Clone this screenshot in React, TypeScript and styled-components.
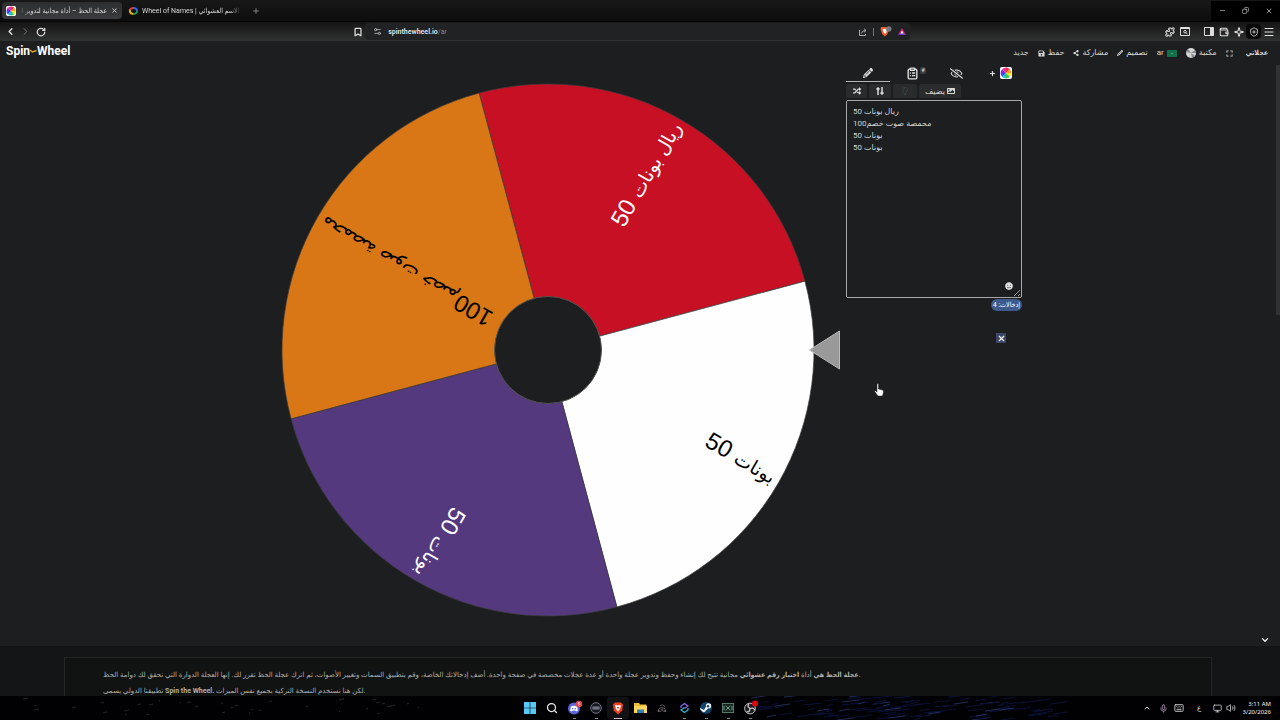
import React from "react";
import styled, { createGlobalStyle, css } from "styled-components";
import { Bookmark, ChevronDown, ChevronLeft, ChevronRight, ChevronUp, ClipboardList, Copy, Keyboard, Menu, Mic, Minus, Monitor, Plus, Puzzle, RotateCw, Search, Settings2, ShieldPlus, Sparkle, Volume2, Wallet, X } from "lucide-react";
import { FaRegEyeSlash, FaRandom, FaImage, FaShareAlt, FaSave, FaExpand, FaRegLightbulb, FaSmile } from "react-icons/fa";
import { FaPencil } from "react-icons/fa6";

const GlobalStyle = createGlobalStyle`
  * { box-sizing: border-box; }
  body { margin: 0; background: #1c1e1f; font-family: Roboto, "DejaVu Sans", sans-serif; color: #d8d8d8; }
  button, textarea { font: inherit; color: inherit; }
  svg { display: block; flex: none; }
`;

const narrow = css`
  font-family: Roboto, "DejaVu Sans Condensed", "DejaVu Sans", sans-serif;
`;

const Desktop = styled.div`
  position: relative;
  display: flex;
  flex-direction: column;
  min-height: 100vh;
  overflow: hidden;
`;

const TabStrip = styled.div`
  display: flex;
  align-items: center;
  gap: 2px;
  height: 22px;
  padding-left: 2px;
  background: linear-gradient(#181818, #0d0d0d);
  border-bottom: 1px solid #050505;
`;

const Tab = styled.div<{ $active?: boolean }>`
  display: flex;
  align-items: center;
  gap: 4px;
  width: ${(p) => (p.$active ? 120 : 122)}px;
  height: 17px;
  padding: 0 4px;
  border-radius: 4px;
  ${(p) => p.$active && css`background: linear-gradient(#2d2e2f, #3b3c3d);`}
`;

const TabTitle = styled.span<{ $rtl?: boolean; $width: number }>`
  ${narrow}
  width: ${(p) => p.$width}px;
  overflow: hidden;
  white-space: nowrap;
  font-size: 7px;
  line-height: 12px;
  direction: ${(p) => (p.$rtl ? "rtl" : "ltr")};
  mask-image: linear-gradient(${(p) => (p.$rtl ? "to left" : "to right")}, #000 88%, transparent);
`;

const IconButton = styled.button<{ $w?: number; $dim?: boolean; $dark?: boolean; $apart?: boolean }>`
  display: flex;
  align-items: center;
  justify-content: center;
  width: ${(p) => p.$w ?? 15}px;
  height: 15px;
  margin-left: ${(p) => (p.$apart ? 9 : 0)}px;
  padding: 0;
  border: 0;
  border-radius: 4px;
  background: ${(p) => (p.$dark ? "#080808" : "none")};
  color: ${(p) => (p.$dim ? "#808080" : "#dedede")};
`;

const WindowButtons = styled.div`
  display: flex;
  align-items: center;
  justify-content: space-between;
  height: 20px;
  margin-left: auto;
  background: #000;
`;

const Toolbar = styled.div`
  display: flex;
  align-items: center;
  height: 19px;
  padding: 0 4px 0 3px;
  background: linear-gradient(#151515, #303131);
`;

const Spacer = styled.div<{ $grow?: number }>`
  flex: ${(p) => p.$grow ?? 1};
`;

const AddressGroup = styled.div`
  display: flex;
  align-items: center;
  width: 44%;
`;

const AddressBar = styled.div`
  display: flex;
  flex: 1;
  align-items: center;
  gap: 6px;
  height: 17px;
  padding: 0 4px 0 8px;
  border-radius: 4px;
  background: #202223;
  font-size: 7px;
  color: #888;
  b { color: #ddd; }
`;

const Divider = styled.span`
  width: 1px;
  height: 8px;
  background: #777;
`;

const SiteHeader = styled.header`
  display: flex;
  align-items: center;
  justify-content: space-between;
  height: 24px;
  padding: 0 12px 0 6px;
`;

const Logo = styled.a`
  display: flex;
  align-items: center;
  height: 20px;
  margin-bottom: 4px;
  color: #fff;
  font-weight: 700;
  font-size: 12px;
  text-decoration: none;
`;

const Nav = styled.nav`
  display: flex;
  align-items: center;
  gap: 9px;
`;

const NavLink = styled.a<{ $strong?: boolean }>`
  display: flex;
  align-items: center;
  gap: 3px;
  color: #d6d6d6;
  font-size: 8px;
  line-height: 12px;
  text-decoration: none;
  white-space: nowrap;
  ${(p) => p.$strong && css`
    ${narrow}
    margin-left: 4px;
    font-size: 7px;
    font-weight: 700;
  `}
`;

const Flag = styled.span`
  width: 10px;
  height: 7px;
  border-radius: 1px;
  background: #12704b;
  color: #b9dccb;
  font-size: 4px;
  line-height: 6px;
  text-align: center;
`;

const Stage = styled.main`
  position: relative;
  display: grid;
  flex: 1;
  grid-template-columns: minmax(0, 560px) 176px;
  gap: 6px;
  justify-content: center;
  align-items: start;
  padding-left: 22px;
`;

const WheelDrawing = styled.svg`
  width: 100%;
  height: auto;
  margin-top: 17px;
`;

const SliceText = styled.text<{ $fill: string }>`
  fill: ${(p) => p.$fill};
  font-family: "Liberation Sans", "DejaVu Sans", sans-serif;
  font-size: 19px;
  text-anchor: end;
`;

const SliceNumber = styled.tspan`
  font-size: 24px;
`;

const Panel = styled.aside`
  display: flex;
  flex-direction: column;
`;

const PanelTabs = styled.div`
  display: grid;
  grid-template-columns: repeat(4, 1fr);
`;

const PanelTab = styled.button<{ $active?: boolean }>`
  position: relative;
  display: flex;
  align-items: center;
  justify-content: center;
  gap: 4px;
  height: 17px;
  padding: 0;
  border: 0;
  border-bottom: 1px solid ${(p) => (p.$active ? "#b5b5b5" : "transparent")};
  background: none;
  color: #e2e2e2;
`;

const Mark = styled.span`
  position: absolute;
  top: 2px;
  right: 8px;
  width: 6px;
  border-radius: 2px;
  background: #3c3f41;
  font-size: 5px;
  line-height: 7px;
`;

const Tools = styled.div`
  display: flex;
  gap: 2px;
  margin: 2px 0;
`;

const Tool = styled.button<{ $w: number; $dim?: boolean }>`
  display: flex;
  align-items: center;
  justify-content: center;
  gap: 2px;
  width: ${(p) => p.$w}px;
  height: 14px;
  padding: 0;
  border: 0;
  border-radius: 2px;
  background: #292b2c;
  color: ${(p) => (p.$dim ? "#3b4345" : "#dadada")};
  font-size: 8px;
`;

const Entries = styled.div`
  position: relative;
`;

const EntryBox = styled.textarea`
  display: block;
  width: 100%;
  height: 198px;
  padding: 5px 6px;
  border: 1px solid #a8a8a8;
  border-radius: 2px;
  outline: 0;
  background: #1c1e1f;
  color: #d4d4d4;
  font-size: 8px;
  line-height: 12px;
`;

const Smile = styled.button`
  position: absolute;
  right: 9px;
  bottom: 8px;
  padding: 0;
  border: 0;
  background: none;
  color: #e0e0e0;
`;

const Count = styled.span`
  ${narrow}
  align-self: flex-end;
  height: 12px;
  margin-top: 1px;
  padding: 0 2px;
  border-radius: 6px;
  background: #3e5a8d;
  color: #fff;
  font-size: 7px;
  line-height: 12px;
`;

const Close = styled.button`
  display: flex;
  align-self: flex-end;
  align-items: center;
  justify-content: center;
  width: 10px;
  height: 10px;
  margin: 22px 16px 0 0;
  padding: 0;
  border: 0;
  background: #3c4568;
  color: #fff;
`;

const Cursor = styled.svg`
  position: absolute;
  left: 874px;
  top: 383px;
`;

const Scroll = styled.div`
  position: absolute;
  top: 0;
  right: 0;
  width: 4px;
  height: 250px;
  background: #303234;
`;

const Down = styled.button`
  position: absolute;
  right: 10px;
  bottom: 1px;
  padding: 0;
  border: 0;
  background: none;
  color: #eee;
`;

const About = styled.footer`
  height: 50px;
  padding: 11px 68px 0 64px;
  background: #131516;
  overflow: hidden;
`;

const AboutCard = styled.div`
  height: 60px;
  padding: 9px 38px;
  border: 1px solid #232625;
  background: #111312;
  color: #aeb0af;
  font-size: 7px;
  line-height: 16px;
  p { margin: 0; white-space: nowrap; }
  b { ${narrow} }
`;

const Taskbar = styled.div`
  position: relative;
  display: grid;
  grid-template-columns: 1fr auto 1fr;
  align-items: center;
  height: 24px;
  background: #010103;
`;

const Waves = styled.svg`
  position: absolute;
  inset: 0;
  width: 100%;
  height: 100%;
`;

const Apps = styled.div`
  position: relative;
  display: flex;
  grid-column: 2;
`;

const AppButton = styled.button<{ $open?: boolean; $active?: boolean }>`
  position: relative;
  display: flex;
  align-items: center;
  justify-content: center;
  width: 22px;
  height: 22px;
  padding: 0;
  border: 0;
  border-radius: 3px;
  background: ${(p) => (p.$active ? "#111214" : "none")};
  color: #eee;
  &::after {
    content: "";
    position: absolute;
    bottom: 0;
    width: ${(p) => (p.$active ? 8 : 3)}px;
    height: 1px;
    background: ${(p) => (p.$active ? "#d8bede" : p.$open ? "#8a8a8a" : "transparent")};
  }
`;

const Tray = styled.div`
  position: relative;
  display: flex;
  align-items: center;
  justify-content: flex-end;
  padding-right: 9px;
`;

const LangGlyph = styled.span`
  font-size: 7px;
`;

const Clock = styled.time`
  width: 34px;
  color: #f2f2f2;
  font-family: "Noto Sans", sans-serif;
  font-size: 6px;
  line-height: 8px;
  text-align: right;
  white-space: nowrap;
`;

const HUES = ["#ff2e2e", "#ff9b1f", "#f6e52b", "#3ecb45", "#20bfe8", "#2e4bf0", "#8a25d8", "#f02bb0"];

const slice = (cx: number, cy: number, r: number, from: number, sweep: number) => {
  const at = (deg: number) => {
    const a = (deg * Math.PI) / 180;
    return `${cx + r * Math.cos(a)} ${cy + r * Math.sin(a)}`;
  };
  return `M${cx} ${cy}L${at(from)}A${r} ${r} 0 0 1 ${at(from + sweep)}Z`;
};

const ColorWheel = ({ size = 12 }: { size?: number }) => (
  <svg width={size} height={size} viewBox="0 0 12 12">
    <rect width="12" height="12" rx="2" fill="#fff" />
    {HUES.map((h, i) => <path key={h} d={slice(6, 6, 5.4, i * 45 - 90, 45)} fill={h} />)}
  </svg>
);

const SLICES = [
  { label: "ريال بونات", amount: " 50", fill: "#c81025", text: "#fff", from: -105 },
  { label: "بونات", amount: " 50", fill: "#fefefe", text: "#000", from: -15 },
  { label: "بونات", amount: " 50", fill: "#55397f", text: "#fff", from: 75 },
  { label: "محمصة صوت خصم", amount: "100", fill: "#d97716", text: "#000", from: 165 },
];

const Wheel = () => (
  <WheelDrawing viewBox="0 0 560 536" role="img" aria-label="عجلة الحظ">
    {SLICES.map((s) => <path key={s.from} d={slice(268, 268, 266, s.from, 90)} fill={s.fill} stroke="#3c3c3c" strokeWidth="0.7" />)}
    {SLICES.map((s) => (
      <SliceText key={s.from} $fill={s.text} transform={`rotate(${s.from + 45} 268 268)`} x="528" y="273">
        {s.label}<SliceNumber>{s.amount}</SliceNumber>
      </SliceText>
    ))}
    <circle cx="268" cy="268" r="53.5" fill="#1c1e1f" stroke="#55564f" />
    <path d="M529.5 268L559.5 249V287Z" fill="#999" stroke="#bcbcbc" />
  </WheelDrawing>
);

const noise = (n: number) => {
  const v = Math.sin(n * 127.1) * 43758.5;
  return v - Math.floor(v);
};
const streaks = Array.from({ length: 130 }, (_, i) => ({
  x: 750 + Math.round(noise(i) * 310),
  y: Math.round(noise(i + 200) * 24),
  w: 5 + Math.round(noise(i + 400) * 14),
  c: noise(i + 600) > 0.88 ? "#212c55" : "#0a1034",
}));
const specks = Array.from({ length: 36 }, (_, i) => ({
  x: Math.round(noise(i + 50) * 420),
  y: 2 + Math.round(noise(i + 90) * 20),
  w: 1 + Math.round(noise(i + 130) * 4),
}));

const apps: { name: string; open?: boolean; active?: boolean; icon: React.ReactNode }[] = [
  { name: "Start", icon: <svg width="12" height="12" viewBox="0 0 12 12"><path fill="#5ac8f5" d="M0 0h5.7v5.7H0zM6.3 0H12v5.7H6.3zM0 6.3h5.7V12H0zM6.3 6.3H12V12H6.3z" /></svg> },
  { name: "Search", icon: <Search size={12} strokeWidth={2.5} /> },
  { name: "Discord", open: true, icon: (
    <svg width="18" height="16" viewBox="0 0 18 16"><circle cx="9" cy="8.5" r="6" fill="#5967db" /><path d="M6 6.500q3-1.300 6 0l1 4-2 1-.7-1H7.700l-.7 1-2-1z" fill="#fff" /><circle cx="7.700" cy="8.800" r=".8" fill="#5967db" /><circle cx="10.300" cy="8.800" r=".8" fill="#5967db" /><circle cx="14" cy="4" r="3.300" fill="#e0464e" /><path d="M15 2.500h-1.600v1.300h1.200q1 1-1.200 1.500" fill="none" stroke="#fff" strokeWidth=".6" /></svg>) },
  { name: "Stream", open: true, icon: <svg width="12" height="12" viewBox="0 0 12 12"><circle cx="6" cy="6" r="5.300" fill="#15161f" stroke="#77778a" /><path d="M2.500 4.500h7v3h-7z" fill="#8e8fa0" /><path d="M3.500 6h1M5.500 6h1M7.500 6h1" stroke="#15161f" strokeWidth="1" /></svg> },
  { name: "Brave", active: true, icon: <svg width="12" height="13" viewBox="0 0 12 13"><path d="M3 .5h6l2 2-.7 6L6 12.500 1.700 8.500 1 2.500z" fill="#ed3f21" /><path d="M3 3.500l1.500-.5L6 3.500 7.500 3 9 3.500 8 7 6 9.500 4 7z" fill="#fff" /><path d="M4.800 5L6 7.500 7.200 5z" fill="#ed3f21" /></svg> },
  { name: "Files", icon: <svg width="13" height="12" viewBox="0 0 13 12"><path d="M0 1h5l1 1.500h6.500V11H0z" fill="#edbd35" /><path d="M0 4h13v7H0z" fill="#fbd65e" /><path d="M3 7.500h7V11H3z" fill="#2f7fb9" /></svg> },
  { name: "Gauge", icon: <svg width="10" height="10" viewBox="0 0 11 11"><path d="M3 3l3-1 3 2M1 9q1-4 4-4 4 0 5 4" fill="none" stroke="#6b6365" /><path d="M5.500 6v3M1 9h3M7 9h3" stroke="#c9b8b8" strokeWidth=".8" /></svg> },
  { name: "Streamer", open: true, icon: <svg width="9" height="12" viewBox="0 0 9 12" fill="none" strokeWidth="1.300"><path d="M1 6V4L4.500 1.500 8 4 4.500 6.500" stroke="#9460ee" /><path d="M8 6v2L4.500 10.500 1 8l3.500-2.500" stroke="#2cb8cd" /></svg> },
  { name: "Steam", open: true, icon: <svg width="12" height="12" viewBox="0 0 12 12"><circle cx="6" cy="6" r="6" fill="#12436c" /><path d="M0 6l4 2 2-3.500a2.600 2.600 0 1 1 2 2L5.600 9A2 2 0 0 1 2 9L.5 8z" fill="#f3f5f7" /><circle cx="8" cy="4.300" r="1.200" fill="#12436c" /></svg> },
  { name: "Capture", open: true, icon: <svg width="12" height="10" viewBox="0 0 12 10"><rect x=".5" y=".5" width="11" height="9" fill="#14231e" stroke="#587a6b" /><path d="M3.500 2.500l5 5M8.500 2.500l-5 5M2 3v4M10 3v4" stroke="#76a08d" /></svg> },
  { name: "OBS", open: true, icon: <svg width="18" height="16" viewBox="0 0 18 16"><circle cx="9" cy="8.500" r="5.400" fill="#1d1d20" stroke="#bcbcbc" /><path d="M9 8.500Q5.500 6 8 4M9 8.500Q13.500 7 13.500 10.500M9 8.500Q8.500 13 5.500 11.500" fill="none" stroke="#ccc" strokeWidth="1.300" /><circle cx="14" cy="3.500" r="3" fill="#e00514" /></svg> },
];

export default function App() {
  return (
    <Desktop>
      <GlobalStyle />
      <TabStrip>
        <Tab $active>
          <ColorWheel size={10} />
          <TabTitle $rtl $width={87}>عجلة الحظ – أداة مجانية لتدوير العجلة</TabTitle>
          <X size={7} strokeWidth={3} />
        </Tab>
        <Tab>
          <svg width="10" height="10" viewBox="0 0 10 10" fill="none" strokeWidth="2">
            <path d="M2 3.500A4 3 0 0 1 6 2" stroke="#e24335" /><path d="M6 2a3.500 3 0 0 1 3 3" stroke="#3369e8" /><path d="M9 5a4 3 0 0 1-4 3" stroke="#1aa260" /><path d="M5 8Q1 7 2 3.500" stroke="#eeb211" />
          </svg>
          <TabTitle $width={100}>Wheel of Names | منتقي الاسم العشوائي</TabTitle>
        </Tab>
        <IconButton aria-label="New tab" $dim><Plus size={8} strokeWidth={3} /></IconButton>
        <WindowButtons>
          <IconButton aria-label="Minimize" $w={23}><Minus size={7} /></IconButton>
          <IconButton aria-label="Restore" $w={23}><Copy size={7} transform="scale(-1 1)" /></IconButton>
          <IconButton aria-label="Close" $w={23}><X size={8} /></IconButton>
        </WindowButtons>
      </TabStrip>
      <Toolbar>
        <IconButton aria-label="Back"><ChevronLeft size={11} strokeWidth={3} /></IconButton>
        <IconButton aria-label="Forward" $dim><ChevronRight size={11} /></IconButton>
        <IconButton aria-label="Reload"><RotateCw size={10} strokeWidth={3} /></IconButton>
        <Spacer $grow={6} />
        <AddressGroup>
          <IconButton aria-label="Bookmark"><Bookmark size={10} strokeWidth={3} /></IconButton>
          <AddressBar>
            <Settings2 size={9} color="#c8c8c8" />
            <span><b>spinthewheel.io</b>/ar</span>
            <Spacer />
            <svg width="8" height="8" viewBox="0 0 8 8" fill="none" stroke="#aaa"><path d="M.5 2v5.500H6.500V6M2.500 5.500Q2.500 2.500 6.500 2.500M5 .7L7 2.500 5 4.300" /></svg>
            <Divider />
            <svg width="12" height="11" viewBox="0 0 12 11"><path d="M1 1h7l1 2-1.500 5L5 10.500 2 8 .5 3z" fill="#ee5a2b" /><path d="M2.700 3h4L6.500 6 5 8 3.300 6z" fill="#fff" /><circle cx="8.800" cy="3" r="2.700" fill="#777a80" /></svg>
            <svg width="8" height="9" viewBox="0 0 9 9"><path d="M4.500.5L9 8.500H0z" fill="#d6236c" /><path d="M9 8.500H0L1 6.700h7z" fill="#6b37c9" /><path d="M4.500 3.500L6.300 6.800H2.700z" fill="#fff" /></svg>
          </AddressBar>
        </AddressGroup>
        <Spacer $grow={5} />
        <IconButton aria-label="Extensions"><Puzzle size={10} strokeWidth={2.5} /></IconButton>
        <IconButton aria-label="Search tabs"><svg width="10" height="9" viewBox="0 0 10 9" fill="none" stroke="currentColor"><path d="M.5.5h9v8h-9zM.5 1.500h9" /><circle cx="5" cy="4.700" r="1.300" /><path d="M6 5.700l1.500 1.300" /></svg></IconButton>
        <IconButton aria-label="Side panel" $apart><svg width="10" height="9" viewBox="0 0 10 9"><path d="M.5.5h9v8h-9z" fill="none" stroke="currentColor" /><path d="M6 1h3.500v7.500H6z" fill="currentColor" /></svg></IconButton>
        <IconButton aria-label="Wallet"><Wallet size={10} strokeWidth={2.5} /></IconButton>
        <IconButton aria-label="Assistant"><Sparkle size={10} strokeWidth={2.5} /></IconButton>
        <IconButton aria-label="VPN" $dark><ShieldPlus size={10} /></IconButton>
        <IconButton aria-label="Menu"><Menu size={12} /></IconButton>
      </Toolbar>
      <SiteHeader>
        <Logo href="#">
          Spin
          <svg width="7" height="6" viewBox="0 0 7 6"><path d="M0 2l2.500 2 4-1.500" fill="none" stroke="#e0a126" strokeWidth="1.500" /></svg>
          Wheel
        </Logo>
        <Nav>
          <NavLink href="#">جديد</NavLink>
          <NavLink href="#"><FaSave size={7} />حفظ</NavLink>
          <NavLink href="#"><FaShareAlt size={6} />مشاركة</NavLink>
          <NavLink href="#"><FaPencil size={6} />تصميم</NavLink>
          <NavLink href="#">ar<Flag>ــ</Flag></NavLink>
          <NavLink href="#">
            <svg width="10" height="10" viewBox="0 0 10 10"><circle cx="5" cy="5" r="5" fill="#d5d5d5" /><path d="M5 5L0 4l2-3zM5 5l1 5 3-2zM5 5l4-3 1 3z" fill="#85888a" /></svg>
            مكتبة
          </NavLink>
          <NavLink href="#" aria-label="Fullscreen"><FaExpand size={7} /></NavLink>
          <NavLink href="#" $strong>عجلاتي</NavLink>
        </Nav>
      </SiteHeader>
      <Stage>
        <Wheel />
        <Panel>
          <PanelTabs>
            <PanelTab $active aria-label="Edit"><FaPencil size={10} /></PanelTab>
            <PanelTab aria-label="Results"><ClipboardList size={13} strokeWidth={2.5} /><Mark>#</Mark></PanelTab>
            <PanelTab aria-label="Hide"><FaRegEyeSlash size={13} /></PanelTab>
            <PanelTab aria-label="Add wheel"><Plus size={7} strokeWidth={4} /><ColorWheel /></PanelTab>
          </PanelTabs>
          <Tools>
            <Tool $w={21} aria-label="Shuffle"><FaRandom size={8} /></Tool>
            <Tool $w={22} aria-label="Sort"><svg width="8" height="8" viewBox="0 0 8 8"><path d="M2 8V1M.5 2.500L2 1l1.500 1.500M6 0v7M4.500 5.500L6 7l1.500-1.500" fill="none" stroke="currentColor" strokeWidth="1.500" /></svg></Tool>
            <Tool $w={24} $dim aria-label="Ideas"><FaRegLightbulb size={8} /></Tool>
            <Tool $w={42}>يضيف<FaImage size={8} /></Tool>
          </Tools>
          <Entries>
            <EntryBox aria-label="إدخالات" defaultValue={"ريال بونات 50\nمحمصة صوت خصم100\nبونات 50\nبونات 50"} />
            <Smile aria-label="Emoji"><FaSmile size={8} /></Smile>
          </Entries>
          <Count>إدخالات: 4</Count>
          <Close aria-label="Close"><X size={9} strokeWidth={3} /></Close>
        </Panel>
        <Scroll />
        <Down aria-label="Scroll down"><ChevronDown size={10} strokeWidth={3} /></Down>
      </Stage>
      <About>
        <AboutCard>
          <p><b>عجلة الحظ هي</b> أداة <b>اختيار رقم عشوائي</b> مجانية تتيح لك إنشاء وحفظ وتدوير عجلة واحدة أو عدة عجلات مخصصة في صفحة واحدة. أضف إدخالاتك الخاصة، وقم بتطبيق السمات وتغيير الأصوات، ثم اترك عجلة الحظ تقرر لك. إنها العجلة الدوارة التي تحقق لك دوامة الحظ.</p>
          <p>تطبيقنا الدولي يسمى <b>Spin the Wheel.</b> لكن هنا نستخدم النسخة التركية بجميع نفس الميزات.</p>
        </AboutCard>
      </About>
      <Taskbar>
        <Waves viewBox="0 0 1280 24" preserveAspectRatio="none" aria-hidden>
          {streaks.map((s, i) => <path key={i} d={`M${s.x} ${s.y}l${s.w} -2`} stroke={s.c} strokeWidth="1" />)}
          {specks.map((s, i) => <path key={i} d={`M${s.x} ${s.y}l${s.w} -1`} stroke="#25262c" strokeWidth="1" />)}
        </Waves>
        <Apps>
          {apps.map((a) => <AppButton key={a.name} aria-label={a.name} $open={a.open} $active={a.active}>{a.icon}</AppButton>)}
        </Apps>
        <Tray>
          <IconButton aria-label="Hidden icons" $w={16}><ChevronUp size={8} strokeWidth={3} /></IconButton>
          <IconButton aria-label="Microphone" $w={16}><Mic size={9} color="#b79bbd" /></IconButton>
          <IconButton aria-label="Keyboard" $w={16}><Keyboard size={10} /></IconButton>
          <IconButton aria-label="Language" $w={24}><LangGlyph>ع</LangGlyph></IconButton>
          <IconButton aria-label="Network" $w={13}><Monitor size={9} /></IconButton>
          <IconButton aria-label="Volume" $w={13}><Volume2 size={10} /></IconButton>
          <Clock>3:11 AM<br />3/20/2026</Clock>
        </Tray>
      </Taskbar>
      <Cursor width="10" height="14" viewBox="0 0 10 14"><path d="M3 1q1-1 1.500 0v5l4 1q1 .5 1 2l-1 4H4L.7 8.500q0-1 1-.8L3 9z" fill="#fff" stroke="#222" strokeWidth=".5" /></Cursor>
    </Desktop>
  );
}
